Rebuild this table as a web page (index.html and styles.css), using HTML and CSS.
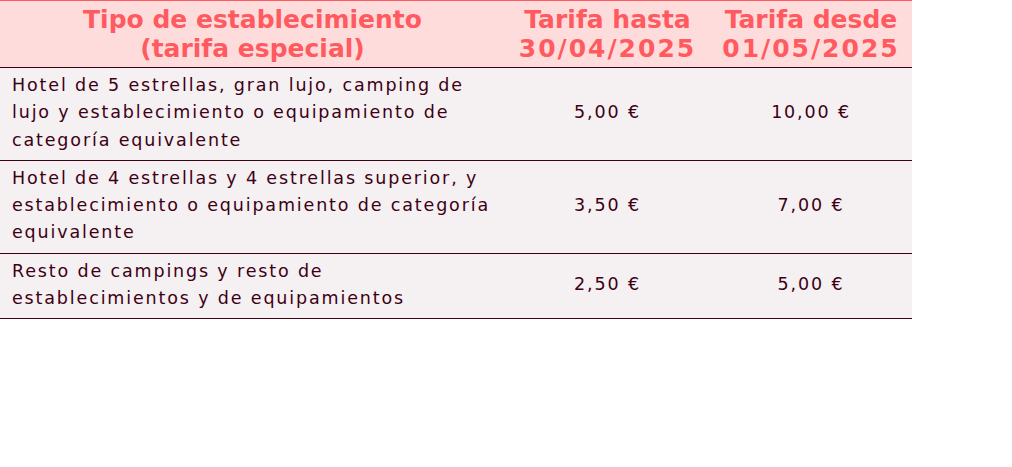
FILE: index.html
```html
<!DOCTYPE html>
<html lang="es">
<head>
<meta charset="utf-8">
<link rel="stylesheet" href="styles.css">
</head>
<body>
<table class="tarifas">
  <colgroup>
    <col class="c1"><col class="c2"><col class="c3">
  </colgroup>
  <thead>
    <tr>
      <th>Tipo de establecimiento<br>(tarifa especial)</th>
      <th>Tarifa hasta<br><span class="fecha">30/04/2025</span></th>
      <th>Tarifa desde<br><span class="fecha">01/05/2025</span></th>
    </tr>
  </thead>
  <tbody>
    <tr>
      <td class="desc">Hotel de 5 estrellas, gran lujo, camping de lujo y establecimiento o equipamiento de categoría equivalente</td>
      <td class="num">5,00 €</td>
      <td class="num">10,00 €</td>
    </tr>
    <tr>
      <td class="desc">Hotel de 4 estrellas y 4 estrellas superior, y establecimiento o equipamiento de categoría equivalente</td>
      <td class="num">3,50 €</td>
      <td class="num">7,00 €</td>
    </tr>
    <tr>
      <td class="desc">Resto de campings y resto de establecimientos y de equipamientos</td>
      <td class="num">2,50 €</td>
      <td class="num">5,00 €</td>
    </tr>
  </tbody>
</table>
</body>
</html>
```
FILE: styles.css
```css
html, body {
  margin: 0;
  padding: 0;
  background: #ffffff;
}
body {
  font-family: "DejaVu Sans", Verdana, sans-serif;
}
.tarifas {
  width: 912px;
  border-collapse: collapse;
  table-layout: fixed;
}
.c1 { width: 505px; }
.c2 { width: 205px; }
.c3 { width: 202px; }
.tarifas th {
  background: #ffdcdc;
  color: #ff5a5f;
  font-size: 25px;
  font-weight: bold;
  line-height: 29px;
  padding: 4px 4px;
  text-align: center;
  border-top: 1px solid #ff5a5f;
  border-bottom: 1px solid #3d0014;
  letter-spacing: 0;
}
.tarifas th .fecha {
  letter-spacing: 2px;
}
.tarifas td {
  background: #f5f0f2;
  color: #3d0014;
  font-size: 17.5px;
  line-height: 27.3px;
  padding: 4px 12px 6px;
  border-bottom: 1px solid #3d0014;
  letter-spacing: 1.85px;
  vertical-align: middle;
}
.tarifas td.num {
  text-align: center;
}
```
